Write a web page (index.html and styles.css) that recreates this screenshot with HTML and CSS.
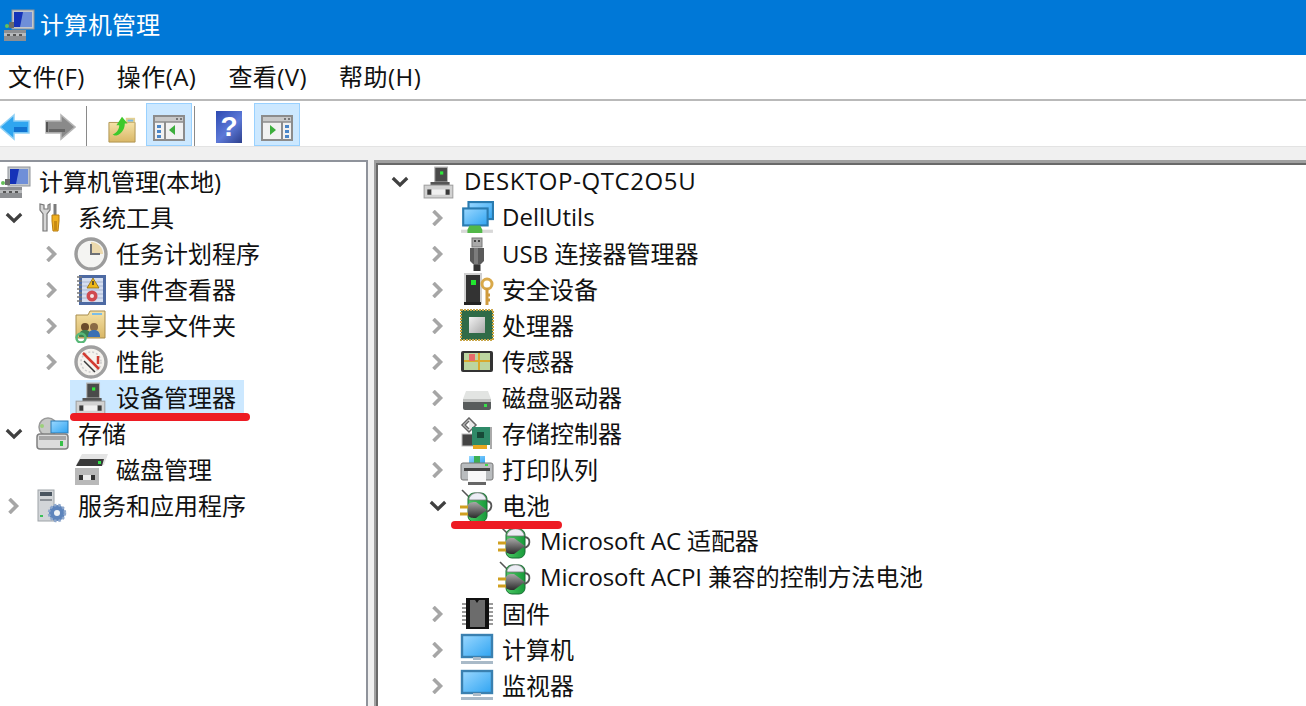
FILE: index.html
```html
<!DOCTYPE html>
<html lang="zh-CN">
<head>
<meta charset="utf-8">
<title>计算机管理</title>
<link rel="stylesheet" href="styles.css">
</head>
<body>
<svg class="defs" width="0" height="0" aria-hidden="true">
  <defs>
    <linearGradient id="gBlue" x1="0" y1="0" x2="1" y2="1"><stop offset="0" stop-color="#9bd8ff"/><stop offset="1" stop-color="#2fa4f2"/></linearGradient>
    <linearGradient id="gGreen" x1="0" y1="0" x2="1" y2="0"><stop offset="0" stop-color="#4cc864"/><stop offset="1" stop-color="#189a3a"/></linearGradient>
    <linearGradient id="gFolder" x1="0" y1="0" x2="0" y2="1"><stop offset="0" stop-color="#f5e2a8"/><stop offset="1" stop-color="#d9b766"/></linearGradient>
    <linearGradient id="gChip" x1="0" y1="0" x2="1" y2="1"><stop offset="0" stop-color="#f2f2f2"/><stop offset="1" stop-color="#a8a8a8"/></linearGradient>
    <linearGradient id="gPlug" x1="0" y1="0" x2="0" y2="1"><stop offset="0" stop-color="#a8a8a8"/><stop offset="1" stop-color="#2c2c2c"/></linearGradient>

    <symbol id="i-chevron-r" viewBox="0 0 16 16"><path d="M2.500 1 9.500 8l-7 7" fill="none" stroke="#a6a6a6" stroke-width="3.600"/></symbol>
    <symbol id="i-chevron-d" viewBox="0 0 18 12"><path d="M1.800 2 9 9l7.200-7" fill="none" stroke="#404040" stroke-width="3.200"/></symbol>

    <symbol id="i-computer" viewBox="0 0 32 32">
      <rect x="8" y="1" width="22" height="19" fill="#c4c8cc" stroke="#8f9499"/>
      <rect x="10" y="3" width="18" height="15" fill="#6f8fd8"/>
      <path d="M10 3h9l-3 15h-6z" fill="#1533b8"/>
      <path d="M5 13h5v6H5z" fill="#6a6a6a"/>
      <circle cx="3" cy="17" r="2" fill="#66c05a"/>
      <rect x="0" y="21" width="22" height="11" fill="#8d8f92"/>
      <rect x="0" y="24" width="22" height="3" fill="#b8babc"/>
      <path d="M3 25h3v2H3zM9 25h3v2H9zM15 25h3v2h-3z" fill="#555"/>
    </symbol>
    <symbol id="i-tools" viewBox="0 0 34 32">
      <path d="M4 2v6l3 4v17h4V12l3-4V2l-2 1v4H8V3z" fill="#d6d6d6" stroke="#777" stroke-width="1.200"/>
      <rect x="17.500" y="2" width="3" height="12" fill="#7a7a7a"/>
      <path d="M16 13h7v6l-1 10h-5l-1-10z" fill="#f0b020" stroke="#b87d10"/>
      <path d="M18 19h3v9h-3z" fill="#c88a12"/>
    </symbol>
    <symbol id="i-clock" viewBox="0 0 34 34">
      <circle cx="17" cy="17" r="15" fill="#f4f4f2" stroke="#9c9c9c" stroke-width="3.400"/>
      <path d="M17 5a12 12 0 0 1 12 12H17z" fill="#ecd9ad"/>
      <path d="M17 7v10h9" fill="none" stroke="#6d7075" stroke-width="2"/>
    </symbol>
    <symbol id="i-event" viewBox="0 0 34 34">
      <rect x="5" y="2" width="27" height="30" fill="#4d6aa3"/>
      <rect x="8" y="5" width="21" height="24" fill="#d6dff0"/>
      <path d="M8 9h21M8 13h21M8 17h21M8 21h21M8 25h21" stroke="#a9b6d0"/>
      <path d="M3 4h5M3 8h5M3 12h5M3 16h5M3 20h5M3 24h5M3 28h5" stroke="#777" stroke-width="1.600"/>
      <path d="M19 5l6 10H13z" fill="#f0b818" stroke="#8a6a10" stroke-width=".8"/>
      <path d="M19 8v4" stroke="#333" stroke-width="1.500"/>
      <circle cx="18" cy="23" r="5.500" fill="#d04a50"/>
      <circle cx="18" cy="23" r="2" fill="#f5e5e5"/>
    </symbol>
    <symbol id="i-share" viewBox="0 0 34 34">
      <path d="M2 6h12l2-4h15v27H2z" fill="url(#gFolder)" stroke="#a88d4e"/>
      <path d="M18 4h10v2H18z" fill="#7bbde8"/>
      <circle cx="11" cy="18" r="4" fill="#6a4a2a"/>
      <path d="M5 28c0-6 3-7 6-7s6 1 6 7z" fill="#3d7f50"/>
      <circle cx="20" cy="18" r="4" fill="#8a6a44"/>
      <path d="M14 28c0-6 3-7 6-7s6 1 6 7z" fill="#3a70b5"/>
      <circle cx="7" cy="29" r="4.500" fill="none" stroke="#58b878" stroke-width="2.500"/>
    </symbol>
    <symbol id="i-perf" viewBox="0 0 34 34">
      <circle cx="17" cy="17" r="15" fill="#f5f3ef" stroke="#a0a0a0" stroke-width="3.400"/>
      <circle cx="17" cy="17" r="10" fill="none" stroke="#ccc" stroke-width="1.500" stroke-dasharray="2 2"/>
      <path d="M9 8l16 16M24 11v8" stroke="#d23c32" stroke-width="2.500" fill="none"/>
      <path d="M10 16l11 11" stroke="#3a3a3a" stroke-width="1.500"/>
    </symbol>
    <symbol id="i-device" viewBox="0 0 32 32">
      <path d="M12 2h12v14H12z" fill="#4a4a4a" stroke="#b8b8b8"/>
      <rect x="17" y="6" width="3" height="3" fill="#2ee83a"/>
      <rect x="8" y="16" width="18" height="3" fill="#555"/>
      <rect x="2" y="19" width="27" height="12" fill="#d2d2d2" stroke="#a0a0a0"/>
      <rect x="5" y="23" width="4" height="5" fill="#3a3a3a"/>
      <rect x="22" y="23" width="4" height="5" fill="#3a3a3a"/>
      <rect x="9" y="23" width="13" height="5" fill="#f0f0f0"/>
    </symbol>
    <symbol id="i-storage" viewBox="0 0 34 34">
      <circle cx="12" cy="10" r="9" fill="#c7c9c7" stroke="#9a9a9a" stroke-width="1.500"/>
      <circle cx="6" cy="9" r="2" fill="#9bd07a"/>
      <rect x="15" y="4" width="17" height="12" fill="url(#gBlue)" stroke="#2b7bb5"/>
      <rect x="1" y="17" width="31" height="15" rx="3" fill="#dcdcdc" stroke="#808080" stroke-width="1.500"/>
      <rect x="3" y="19" width="27" height="4" fill="#a6a6a6"/>
      <rect x="24" y="24" width="3" height="5" fill="#38c048"/>
    </symbol>
    <symbol id="i-disk" viewBox="0 0 34 34">
      <path d="M8 1h26l-4 11H2z" fill="#e4e4e4"/>
      <path d="M6 6h24l-2 7H2z" fill="#3a3a3a"/>
      <rect x="24" y="8" width="3" height="3" fill="#35e04a"/>
      <rect x="1" y="15" width="24" height="17" fill="#b9b9b9"/>
      <rect x="5" y="22" width="4" height="5" fill="#333"/>
      <rect x="17" y="22" width="4" height="5" fill="#333"/>
      <rect x="9" y="22" width="8" height="5" fill="#ececec"/>
    </symbol>
    <symbol id="i-server" viewBox="0 0 34 34">
      <rect x="2" y="1" width="16" height="31" fill="#d2d5d8" stroke="#9ea3a8"/>
      <rect x="4" y="3" width="12" height="4" fill="#4a5560"/>
      <rect x="4" y="10" width="12" height="2" fill="#8d9298"/>
      <rect x="4" y="26" width="3" height="2" fill="#3cc058"/>
      <circle cx="21" cy="24" r="8" fill="#5d84bc"/>
      <circle cx="21" cy="24" r="8" fill="none" stroke="#8fa8cc" stroke-width="2.500" stroke-dasharray="2.500 1.800"/>
      <circle cx="21" cy="24" r="3" fill="#eef2f6"/>
    </symbol>
    <symbol id="i-network" viewBox="0 0 32 32">
      <rect x="8" y="1" width="23" height="16" fill="url(#gBlue)" stroke="#2a7bb0" stroke-width="2"/>
      <rect x="3" y="7" width="23" height="16" fill="url(#gBlue)" stroke="#2a7bb0" stroke-width="2"/>
      <rect x="1" y="27" width="30" height="3" fill="#d8d8d8"/>
      <path d="M9 23h10l2 4v3H7v-3z" fill="#52b848"/>
    </symbol>
    <symbol id="i-usb" viewBox="0 0 32 34">
      <rect x="11" y="1" width="10" height="9" fill="#a9a9a9" stroke="#777"/>
      <rect x="13" y="3" width="2" height="2" fill="#444"/><rect x="17" y="3" width="2" height="2" fill="#444"/>
      <path d="M9 11h14v13l-4 4h-6l-4-4z" fill="#5a5a5a"/>
      <path d="M13 11h4v16h-4z" fill="#7c7c7c"/>
      <rect x="12.500" y="28" width="7" height="6" fill="#333"/>
    </symbol>
    <symbol id="i-security" viewBox="0 0 34 34">
      <rect x="5" y="1" width="16" height="29" fill="#333" stroke="#d0d0d0" stroke-width="2"/>
      <rect x="11" y="7" width="5" height="5" fill="#22e830"/>
      <rect x="4" y="29" width="17" height="3" fill="#222"/>
      <circle cx="27" cy="11" r="5" fill="none" stroke="#d9a94a" stroke-width="3"/>
      <path d="M27 15v17M27 22h3M27 27h3" stroke="#cf9a3c" stroke-width="3"/>
    </symbol>
    <symbol id="i-cpu" viewBox="0 0 34 34">
      <rect x="1" y="1" width="32" height="30" fill="#2f6b47" stroke="#c9a647" stroke-width="2" stroke-dasharray="2 1"/>
      <rect x="3" y="3" width="28" height="26" fill="#2f6b47"/>
      <rect x="9" y="8" width="16" height="16" fill="url(#gChip)"/>
    </symbol>
    <symbol id="i-sensor" viewBox="0 0 34 34">
      <rect x="1" y="6" width="32" height="21" rx="2" fill="#333"/>
      <rect x="4" y="8" width="26" height="17" fill="#bcd5a0"/>
      <path d="M4 16h26M19 8v17" stroke="#d9a92e" stroke-width="2"/>
      <rect x="9" y="9" width="6" height="7" fill="#e86a6a"/>
    </symbol>
    <symbol id="i-hdd" viewBox="0 0 34 34">
      <path d="M6 10h22l3 8H3z" fill="#e2e4e2"/>
      <rect x="3" y="18" width="28" height="11" rx="2" fill="#585c5c"/>
      <rect x="3" y="18" width="28" height="3" fill="#bfc1bf"/>
      <rect x="24" y="23" width="3" height="3" fill="#38e04a"/>
    </symbol>
    <symbol id="i-controller" viewBox="0 0 34 34">
      <path d="M9 1l7 7-7 7-7-7zM9 4l-4 4 4 4" fill="#e9e9e9" stroke="#666" stroke-width="1.500"/>
      <rect x="2" y="17" width="12" height="12" fill="#444" stroke="#bbb"/>
      <rect x="12" y="10" width="20" height="18" fill="#2f8a68"/>
      <rect x="17" y="15" width="7" height="6" fill="#174a38"/>
      <rect x="13" y="28" width="14" height="4" fill="#e8a820"/>
      <rect x="30" y="10" width="2" height="22" fill="#aaa"/>
    </symbol>
    <symbol id="i-printer" viewBox="0 0 34 34">
      <path d="M9 3h16v8H9z" fill="url(#gBlue)"/>
      <path d="M14 3h6v8h-6z" fill="#3cb054"/>
      <rect x="1" y="10" width="32" height="17" rx="2" fill="#b9bcbe" stroke="#777"/>
      <rect x="4" y="15" width="26" height="3" fill="#444"/>
      <rect x="8" y="18" width="18" height="12" fill="#f8f8f8"/>
      <rect x="25" y="11" width="3" height="2" fill="#3dd848"/>
      <rect x="8" y="29" width="18" height="3" fill="#666"/>
    </symbol>
    <symbol id="i-battery" viewBox="0 0 34 34">
      <path d="M2 1l7 7" stroke="#555" stroke-width="1.600"/>
      <rect x="8" y="4" width="19" height="29" rx="6" fill="url(#gGreen)" stroke="#176d32"/>
      <path d="M9 9c3-7 14-7 17 0v2H9z" fill="#ecedf5" stroke="#777" stroke-width=".8"/>
      <path d="M27 12c6 1 6 9-1 11" fill="none" stroke="#555" stroke-width="1.800"/>
      <path d="M0 18h9M0 25h9" stroke="#d0a020" stroke-width="2.800"/>
      <path d="M8 16c1-3 5-3 8-3l11 8-11 8c-3 0-7 0-8-3z" fill="url(#gPlug)"/>
    </symbol>
    <symbol id="i-firmware" viewBox="0 0 34 34">
      <rect x="6" y="1" width="23" height="31" fill="#111"/>
      <path d="M10 3h5l2 3 2-3h6v27H10z" fill="#6c6c6c"/>
      <path d="M2 7h4M2 11h4M2 15h4M2 19h4M2 23h4M2 27h4M29 7h4M29 11h4M29 15h4M29 19h4M29 23h4M29 27h4" stroke="#9a9a9a" stroke-width="2"/>
    </symbol>
    <symbol id="i-monitor" viewBox="0 0 34 34">
      <rect x="2" y="2" width="30" height="22" fill="url(#gBlue)" stroke="#3a80b0" stroke-width="2.400"/>
      <rect x="13" y="24" width="8" height="3" fill="#a9bac8"/>
      <rect x="1" y="28" width="32" height="3" fill="#a9bac8"/>
    </symbol>

    <symbol id="t-back" viewBox="0 0 32 32">
      <path d="M15 4 1 16l14 12v-6h15V10H15z" fill="#2fa6f0" stroke="#8fd0f5" stroke-width="1.500"/>
      <path d="M15 16h13v5H15z" fill="#1273d0"/>
    </symbol>
    <symbol id="t-forward" viewBox="0 0 32 32">
      <path d="M17 4l14 12-14 12v-6H2V10h15z" fill="#8a8a8a" stroke="#b5b5b5" stroke-width="1.500"/>
      <path d="M3 11v10" stroke="#555" stroke-width="2"/>
      <path d="M5 18h16v3H5z" fill="#666"/>
    </symbol>
    <symbol id="t-up" viewBox="0 0 30 30">
      <path d="M1 8h28v21H1z" fill="url(#gFolder)" stroke="#ad9250"/>
      <path d="M19 3h10v5H19z" fill="#e3d091"/><path d="M21 5h6v2h-6z" fill="#7ab8e0"/>
      <path d="M5 21c5-2 7-6 7-10H9l6-9 6 7h-3c0 7-5 13-11 13z" fill="#3ec92c"/>
    </symbol>
    <symbol id="t-pane-left" viewBox="0 0 32 26">
      <rect x="1" y="1" width="30" height="24" fill="#f1f1f1" stroke="#8c8c8c" stroke-width="2"/>
      <rect x="2" y="2" width="28" height="5" fill="#c8c8c8"/>
      <path d="M23 3h2v2h-2zM27 3h2v2h-2z" fill="#777"/>
      <path d="M2 7h28" stroke="#8c8c8c" stroke-width="1.500"/>
      <path d="M12 7v18" stroke="#8c8c8c" stroke-width="2"/>
      <path d="M4 10h4v3H4zM4 15h4v3H4zM4 20h4v3H4z" fill="#4a86c8"/>
      <path d="M22 10v10l-6-5z" fill="#3cae3c"/>
    </symbol>
    <symbol id="t-pane-right" viewBox="0 0 32 26">
      <rect x="1" y="1" width="30" height="24" fill="#f1f1f1" stroke="#8c8c8c" stroke-width="2"/>
      <rect x="2" y="2" width="28" height="5" fill="#c8c8c8"/>
      <path d="M23 3h2v2h-2zM27 3h2v2h-2z" fill="#777"/>
      <path d="M2 7h28" stroke="#8c8c8c" stroke-width="1.500"/>
      <path d="M21 7v18" stroke="#8c8c8c" stroke-width="2"/>
      <path d="M24 10h4v3h-4zM24 15h4v3h-4zM24 20h4v3h-4z" fill="#4a86c8"/>
      <path d="M9 10v10l6-5z" fill="#3cae3c"/>
    </symbol>
  </defs>
</svg>

<header class="titlebar">
  <svg class="title-icon"><use href="#i-computer"/></svg>
  <span class="title-text">计算机管理</span>
</header>

<nav class="menubar">
  <span class="menu-item">文件(F)</span>
  <span class="menu-item">操作(A)</span>
  <span class="menu-item">查看(V)</span>
  <span class="menu-item">帮助(H)</span>
</nav>

<div class="toolbar">
  <span class="tool tool-nav"><svg class="tool-svg"><use href="#t-back"/></svg></span>
  <span class="tool tool-nav"><svg class="tool-svg"><use href="#t-forward"/></svg></span>
  <span class="tool-sep"></span>
  <span class="tool tool-up"><svg class="tool-folder"><use href="#t-up"/></svg></span>
  <span class="tool tool-on"><svg class="tool-pane"><use href="#t-pane-left"/></svg></span>
  <span class="tool-sep tool-sep-b"></span>
  <span class="tool tool-help"><span class="help-icon">?</span></span>
  <span class="tool tool-on"><svg class="tool-pane"><use href="#t-pane-right"/></svg></span>
</div>

<main class="panes">
  <section class="pane pane-left">
    <div class="row root"><svg class="icon icon-root"><use href="#i-computer"/></svg><span class="label label-root">计算机管理(本地)</span></div>
    <div class="row l1"><span class="twisty"><svg class="chev-d"><use href="#i-chevron-d"/></svg></span><svg class="icon"><use href="#i-tools"/></svg><span class="label">系统工具</span></div>
    <div class="row l2"><span class="twisty"><svg class="chev-r"><use href="#i-chevron-r"/></svg></span><svg class="icon"><use href="#i-clock"/></svg><span class="label">任务计划程序</span></div>
    <div class="row l2"><span class="twisty"><svg class="chev-r"><use href="#i-chevron-r"/></svg></span><svg class="icon"><use href="#i-event"/></svg><span class="label">事件查看器</span></div>
    <div class="row l2"><span class="twisty"><svg class="chev-r"><use href="#i-chevron-r"/></svg></span><svg class="icon"><use href="#i-share"/></svg><span class="label">共享文件夹</span></div>
    <div class="row l2"><span class="twisty"><svg class="chev-r"><use href="#i-chevron-r"/></svg></span><svg class="icon"><use href="#i-perf"/></svg><span class="label">性能</span></div>
    <div class="row l2"><span class="twisty"></span><span class="selected"><svg class="icon"><use href="#i-device"/></svg><span class="label">设备管理器</span></span></div>
    <div class="row l1"><span class="twisty"><svg class="chev-d"><use href="#i-chevron-d"/></svg></span><svg class="icon"><use href="#i-storage"/></svg><span class="label">存储</span></div>
    <div class="row l2"><span class="twisty"></span><svg class="icon"><use href="#i-disk"/></svg><span class="label">磁盘管理</span></div>
    <div class="row l1"><span class="twisty"><svg class="chev-r"><use href="#i-chevron-r"/></svg></span><svg class="icon"><use href="#i-server"/></svg><span class="label">服务和应用程序</span></div>
    <span class="mark mark-left"></span>
  </section>

  <section class="pane pane-right">
    <div class="row r0"><span class="twisty"><svg class="chev-d"><use href="#i-chevron-d"/></svg></span><svg class="icon"><use href="#i-device"/></svg><span class="label label-latin label-caps">DESKTOP-QTC2O5U</span></div>
    <div class="row r1"><span class="twisty"><svg class="chev-r"><use href="#i-chevron-r"/></svg></span><svg class="icon"><use href="#i-network"/></svg><span class="label label-latin">DellUtils</span></div>
    <div class="row r1"><span class="twisty"><svg class="chev-r"><use href="#i-chevron-r"/></svg></span><svg class="icon"><use href="#i-usb"/></svg><span class="label">USB 连接器管理器</span></div>
    <div class="row r1"><span class="twisty"><svg class="chev-r"><use href="#i-chevron-r"/></svg></span><svg class="icon"><use href="#i-security"/></svg><span class="label">安全设备</span></div>
    <div class="row r1"><span class="twisty"><svg class="chev-r"><use href="#i-chevron-r"/></svg></span><svg class="icon"><use href="#i-cpu"/></svg><span class="label">处理器</span></div>
    <div class="row r1"><span class="twisty"><svg class="chev-r"><use href="#i-chevron-r"/></svg></span><svg class="icon"><use href="#i-sensor"/></svg><span class="label">传感器</span></div>
    <div class="row r1"><span class="twisty"><svg class="chev-r"><use href="#i-chevron-r"/></svg></span><svg class="icon"><use href="#i-hdd"/></svg><span class="label">磁盘驱动器</span></div>
    <div class="row r1"><span class="twisty"><svg class="chev-r"><use href="#i-chevron-r"/></svg></span><svg class="icon"><use href="#i-controller"/></svg><span class="label">存储控制器</span></div>
    <div class="row r1"><span class="twisty"><svg class="chev-r"><use href="#i-chevron-r"/></svg></span><svg class="icon"><use href="#i-printer"/></svg><span class="label">打印队列</span></div>
    <div class="row r1"><span class="twisty"><svg class="chev-d"><use href="#i-chevron-d"/></svg></span><svg class="icon"><use href="#i-battery"/></svg><span class="label">电池</span></div>
    <div class="row r2"><span class="twisty"></span><svg class="icon"><use href="#i-battery"/></svg><span class="label label-latin label-ms">Microsoft AC 适配器</span></div>
    <div class="row r2"><span class="twisty"></span><svg class="icon"><use href="#i-battery"/></svg><span class="label label-latin label-ms">Microsoft ACPI 兼容的控制方法电池</span></div>
    <div class="row r1"><span class="twisty"><svg class="chev-r"><use href="#i-chevron-r"/></svg></span><svg class="icon"><use href="#i-firmware"/></svg><span class="label">固件</span></div>
    <div class="row r1"><span class="twisty"><svg class="chev-r"><use href="#i-chevron-r"/></svg></span><svg class="icon"><use href="#i-monitor"/></svg><span class="label">计算机</span></div>
    <div class="row r1"><span class="twisty"><svg class="chev-r"><use href="#i-chevron-r"/></svg></span><svg class="icon"><use href="#i-monitor"/></svg><span class="label">监视器</span></div>
    <span class="mark mark-right"></span>
  </section>
</main>
</body>
</html>
```

FILE: styles.css
```css
* { box-sizing: border-box; }

html, body {
  margin: 0;
  height: 100%;
  overflow: hidden;
}

body {
  width: 1306px;
  height: 706px;
  display: flex;
  flex-direction: column;
  background: #f0f0f0;
  color: #111;
  font-family: "Open Sans", "Noto Sans CJK SC", sans-serif;
  font-size: 24px;
}

.defs { position: absolute; }

.titlebar {
  height: 55px;
  flex: none;
  display: flex;
  align-items: center;
  gap: 4px;
  padding: 0 0 8px 4px;
  background: #0078d7;
  color: #fff;
}
.title-icon { width: 32px; height: 32px; flex: none; margin-top: 2px; }

.menubar {
  height: 46px;
  flex: none;
  display: flex;
  align-items: center;
  gap: 32px;
  padding: 0 0 4px 8px;
  background: #fff;
  border-bottom: 2px solid #b9b9b9;
  letter-spacing: .45px;
}

.toolbar {
  height: 46px;
  flex: none;
  display: flex;
  align-items: center;
  background: #fff;
  border-bottom: 1px solid #e3e3e3;
}
.tool {
  display: flex;
  align-items: center;
  justify-content: center;
  height: 43px;
  align-self: flex-end;
}
.tool-nav { width: 43px; }
.tool-nav:first-child { width: 36px; margin-left: -3px; margin-right: 5px; }
.tool-svg { width: 32px; height: 32px; margin-top: 4px; }
.tool-folder { width: 28px; height: 28px; margin-top: 8px; }
.tool-sep {
  width: 1px;
  height: 40px;
  align-self: flex-end;
  background: #8a8a8a;
  margin: 0 20px 0 5px;
}
.tool-sep-b { margin: 0 21px 0 2px; }
.tool-up { width: 30px; margin-right: 9px; }
.tool-on {
  width: 46px;
  background: #cce8ff;
  border: 1px solid #99d1ff;
}
.tool-pane { width: 32px; height: 26px; margin-top: 7px; }
.tool-help { width: 26px; margin-right: 12px; }
.help-icon {
  display: block;
  width: 26px;
  height: 32px;
  margin-top: 4px;
  background: linear-gradient(135deg, #2c49b0, #5d79d8 55%, #2c3f8c);
  color: #fff;
  font: bold 28px/32px "Liberation Sans", sans-serif;
  letter-spacing: 0;
  text-align: center;
}

.panes {
  flex: 1;
  min-height: 0;
  display: flex;
  gap: 6px;
  padding-top: 13px;
  overflow: hidden;
}

.pane {
  position: relative;
  background: #fff;
  overflow: hidden;
}
.pane-left {
  width: 368px;
  flex: none;
  padding-top: 2px;
  border-top: 2px solid #8f939b;
  border-right: 2px solid #8f939b;
}
.pane-right {
  flex: 1;
  padding: 1px 0 0 10px;
  border-top: 3px solid #a0a0a0;
  border-left: 2px solid #a0a0a0;
  box-shadow: inset 2px 2px 0 #696969;
}

.row {
  display: flex;
  align-items: center;
  height: 36px;
  white-space: nowrap;
}
.l2 { padding-left: 38px; }
.r1 { padding-left: 38px; }
.r2 { padding-left: 76px; }

.twisty {
  width: 36px;
  flex: none;
  display: flex;
  align-items: center;
  padding-left: 5px;
}
.chev-d { width: 18px; height: 12px; }
.chev-r { width: 16px; height: 16px; margin-left: 2px; }

.icon {
  width: 34px;
  height: 34px;
  flex: none;
}
.icon-root { width: 32px; height: 32px; }
.label { margin-left: 8px; line-height: 36px; }
.label-root { margin-left: 7px; }
.label-latin { margin-bottom: 2px; }
.label-caps { letter-spacing: .6px; }
.label-ms { letter-spacing: -.12px; }

.selected {
  display: flex;
  align-items: flex-start;
  align-self: flex-start;
  height: 34px;
  background: #cce8ff;
  margin-left: -4px;
  padding: 0 8px 0 4px;
}
.selected .icon { margin-top: 1px; }

.mark {
  position: absolute;
  height: 8px;
  border-radius: 4px;
  background: #ed1c24;
}
.mark-left { left: 70px; top: 251px; width: 180px; }
.mark-right { left: 75px; top: 358px; width: 111px; }
```
